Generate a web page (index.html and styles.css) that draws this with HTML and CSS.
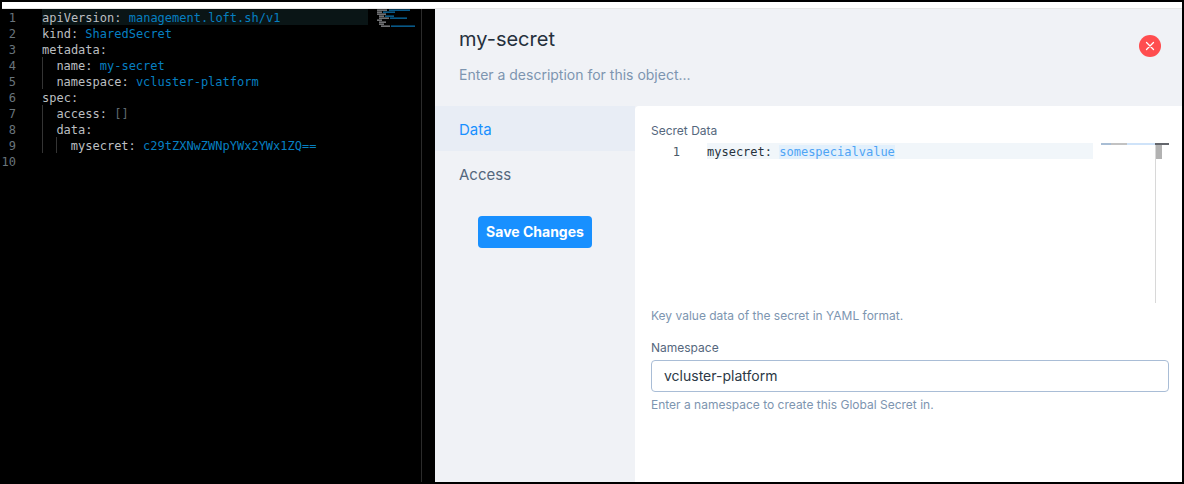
FILE: index.html
```html
<!DOCTYPE html>
<html lang="en">
<head>
<meta charset="utf-8">
<title>my-secret</title>
<link rel="stylesheet" href="styles.css">
</head>
<body>
<div class="frame">
  <div class="topbar"></div>
  <div class="main">
    <section class="yaml">
      <div class="yaml-code">
        <div class="row current"><span class="num">1</span><span class="code">apiVersion: <b>management.loft.sh/v1</b></span></div>
        <div class="row"><span class="num">2</span><span class="code">kind: <b>SharedSecret</b></span></div>
        <div class="row"><span class="num">3</span><span class="code">metadata:</span></div>
        <div class="row"><span class="num">4</span><span class="code"><i class="guide"></i>name: <b>my-secret</b></span></div>
        <div class="row"><span class="num">5</span><span class="code"><i class="guide"></i>namespace: <b>vcluster-platform</b></span></div>
        <div class="row"><span class="num">6</span><span class="code">spec:</span></div>
        <div class="row"><span class="num">7</span><span class="code"><i class="guide"></i>access: <em>[]</em></span></div>
        <div class="row"><span class="num">8</span><span class="code"><i class="guide"></i>data:</span></div>
        <div class="row"><span class="num">9</span><span class="code"><i class="guide"></i><i class="guide"></i>mysecret: <b>c29tZXNwZWNpYWx2YWx1ZQ==</b></span></div>
        <div class="row"><span class="num">10</span><span class="code"></span></div>
      </div>
      <svg class="yaml-minimap" width="38" height="20" viewBox="0 0 38 20" aria-hidden="true">
        <g fill="#8a8c8f">
          <rect x="0" y="0.5" width="10" height="1.3"/><rect x="0" y="2.5" width="5" height="1.3"/><rect x="0" y="4.5" width="9" height="1.3"/>
          <rect x="2" y="6.5" width="5" height="1.3"/><rect x="2" y="8.5" width="10" height="1.3"/><rect x="0" y="10.5" width="5" height="1.3"/>
          <rect x="2" y="12.5" width="7" height="1.3"/><rect x="2" y="14.5" width="5" height="1.3"/><rect x="4" y="16.5" width="9" height="1.3"/>
        </g>
        <g fill="#0a6ea8">
          <rect x="12" y="0.5" width="21" height="1.3"/><rect x="6" y="2.5" width="12" height="1.3"/><rect x="8" y="6.5" width="9" height="1.3"/>
          <rect x="13" y="8.5" width="17" height="1.3"/><rect x="14" y="16.5" width="24" height="1.3"/>
        </g>
      </svg>
    </section>
    <section class="modal">
      <header class="modal-head">
        <h1 class="title">my-secret</h1>
        <p class="desc">Enter a description for this object...</p>
        <button class="close" aria-label="Close">
          <svg width="10" height="10" viewBox="0 0 10 10" aria-hidden="true"><path d="M1.5 1.5l7 7M8.5 1.5l-7 7" stroke="#fff" stroke-width="1.3" stroke-linecap="round" fill="none"/></svg>
        </button>
      </header>
      <div class="modal-body">
        <nav class="side">
          <div class="tab active">Data</div>
          <div class="tab">Access</div>
          <button class="save">Save Changes</button>
        </nav>
        <div class="content">
          <label class="label">Secret Data</label>
          <div class="editor">
            <div class="ed-row">
              <span class="ed-num">1</span>
              <span class="ed-line">mysecret: <span class="ed-val">somespecialvalue</span></span>
            </div>
            <div class="ed-minimap"><span class="mm-a"></span><span class="mm-b"></span><span class="mm-c"></span></div>
            <div class="ed-track"><span class="ed-top"></span><span class="ed-thumb"></span></div>
          </div>
          <p class="help first">Key value data of the secret in YAML format.</p>
          <label class="label ns">Namespace</label>
          <div class="input">vcluster-platform</div>
          <p class="help">Enter a namespace to create this Global Secret in.</p>
        </div>
      </div>
    </section>
  </div>
</div>
</body>
</html>
```

FILE: styles.css
```css
* { box-sizing: border-box; }
html, body { margin: 0; height: 100%; }
body { background: #000; font-family: Inter, "Liberation Sans", sans-serif; }

.frame { width: 1184px; height: 484px; padding: 2px 2px 2px 0; display: flex; flex-direction: column; background: #000; }
.topbar { height: 7px; margin-left: 2px; background: #fff; border-bottom: 1px solid #e6e6e6; flex: none; }
.main { flex: 1; display: flex; min-height: 0; }

.yaml { position: relative; width: 435px; flex: none; background: #000; border-right: 13px solid #000; }
.yaml::after { content: ""; position: absolute; top: 0; bottom: 0; right: 0; width: 1px; background: #2b2b2b; }
.yaml-code { font: 12px/18px "DejaVu Sans Mono", monospace; color: #bcbfc1; }
.row { display: flex; height: 16px; white-space: pre; }
.row.current .code { background: #0a1516; }
.num { width: 16px; flex: none; text-align: right; color: #69747c; }
.code { margin-left: 26px; width: 326px; }
.code b { font-weight: normal; color: #067fc0; }
.code em { font-style: normal; color: #5f686f; }
.guide { display: inline-block; width: 14.4px; height: 16px; vertical-align: top; border-left: 1px solid #343434; }
.yaml-minimap { position: absolute; left: 377px; top: 0; }

.modal { flex: 1; display: flex; flex-direction: column; background: #f0f2f6; min-width: 0; }
.modal-head { position: relative; height: 97px; padding: 18px 24px 0; flex: none; }
.title { margin: 0; font-size: 20px; line-height: 24px; font-weight: 400; color: #25303c; }
.desc { margin: 14px 0 0; font-size: 14px; line-height: 20px; color: #7d95b0; }
.close { position: absolute; right: 21px; top: 26px; width: 22px; height: 22px; padding: 0; border: 0; border-radius: 50%; background: #ff4d4f; display: flex; align-items: center; justify-content: center; }

.modal-body { flex: 1; display: flex; min-height: 0; }
.side { width: 200px; flex: none; display: flex; flex-direction: column; }
.tab { height: 45px; padding-left: 24px; font-size: 15px; line-height: 47px; color: #55677d; }
.tab.active { background: #e8edf5; color: #1890ff; }
.save { align-self: center; margin-top: 20px; width: 114px; height: 32px; padding: 0 0 2px; border: 0; border-radius: 4px; background: #1890ff; color: #fff; font: 700 14px Inter, sans-serif; }

.content { flex: 1; background: #fff; border-top-left-radius: 4px; padding: 17px 13px 0 16px; min-width: 0; }
.label { display: block; font-size: 12px; line-height: 15px; color: #55677d; }
.editor { position: relative; height: 160px; margin-top: 5px; font: 12px/18px "DejaVu Sans Mono", monospace; }
.ed-row { display: flex; height: 16px; white-space: pre; }
.ed-num { width: 29px; flex: none; text-align: right; color: #4b5a68; }
.ed-line { margin-left: 27px; width: 386px; background: #f1f6fa; color: #27323d; }
.ed-val { background: #e2f0fc; color: #4ea4f5; }
.ed-minimap { position: absolute; left: 450px; top: 0; width: 54px; height: 2px; display: flex; }
.mm-a { width: 10px; background: #a8bdd4; }
.mm-b { width: 16px; background: #c2c2c2; }
.mm-c { flex: 1; background: #cfe3f9; }
.ed-track { position: absolute; left: 504px; top: 0; bottom: 0; width: 14px; border-left: 1px solid #d8d8d8; }
.ed-top { position: absolute; left: -1px; right: 0; top: 0; height: 2px; background: #63666c; }
.ed-thumb { position: absolute; left: 0; top: 2px; width: 6px; height: 14px; background: #b2b2b2; }

.help { margin: 0; font-size: 12px; line-height: 16px; color: #7d95b0; }
.help.first { margin-top: 5px; }
.label.ns { margin-top: 16px; }
.input { margin-top: 5px; height: 32px; padding-left: 12px; border: 1px solid #a9bdd6; border-radius: 4px; font-size: 14px; line-height: 30px; color: #2c3845; }
.input + .help { margin-top: 5px; }
```
